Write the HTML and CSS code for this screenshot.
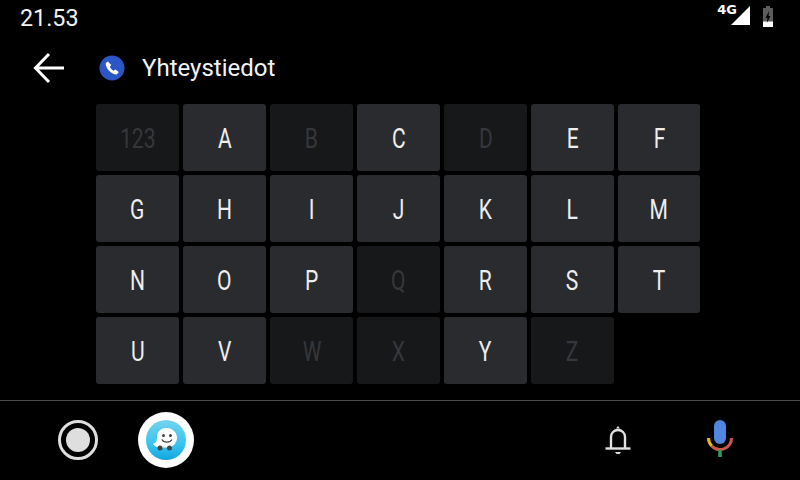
FILE: index.html
```html
<!DOCTYPE html>
<html lang="fi">
<head>
<meta charset="utf-8">
<title>Yhteystiedot</title>
<link rel="stylesheet" href="styles.css">
</head>
<body>
<div class="screen">
  <header class="status">
    <span class="clock">21.53</span>
    <div class="status-icons">
      <span class="net">4G</span>
      <svg class="signal" width="21" height="20" viewBox="0 0 21 20"><path d="M20 0V19H1z" fill="#fff"/></svg>
      <svg class="battery" width="12" height="21" viewBox="0 0 12 21"><path d="M4 0h4v2h3v19H1V2h3z" fill="#5c5c5c"/><path d="M1 15.500h10V21H1z" fill="#fff"/><path d="M7 5 3.500 12H5.500L4.800 17 8.500 10H6.500z" fill="#000"/></svg>
    </div>
  </header>
  <div class="title-row">
    <svg class="back" width="32" height="32" viewBox="0 0 32 32"><path d="M17 2 3.500 16 17 30M3.500 16H32" fill="none" stroke="#fff" stroke-width="3"/></svg>
    <svg class="phone" width="26" height="26" viewBox="0 0 26 26"><circle cx="13" cy="13" r="12.500" fill="#2a56c6"/><path d="M8.800 6.500 6.700 8.200c-.3 5 5.500 11.200 11 11.200l2.100-2.300-3.500-2.700-1.800 1.400c-1.500-.8-3-2.500-3.700-4l1.500-1.700z" fill="#fff"/></svg>
    <h1 class="title">Yhteystiedot</h1>
  </div>
  <main class="keys">
    <div class="key off"><span>123</span></div>
    <div class="key"><span>A</span></div>
    <div class="key off"><span>B</span></div>
    <div class="key"><span>C</span></div>
    <div class="key off"><span>D</span></div>
    <div class="key"><span>E</span></div>
    <div class="key"><span>F</span></div>
    <div class="key"><span>G</span></div>
    <div class="key"><span>H</span></div>
    <div class="key"><span>I</span></div>
    <div class="key"><span>J</span></div>
    <div class="key"><span>K</span></div>
    <div class="key"><span>L</span></div>
    <div class="key"><span>M</span></div>
    <div class="key"><span>N</span></div>
    <div class="key"><span>O</span></div>
    <div class="key"><span>P</span></div>
    <div class="key off"><span>Q</span></div>
    <div class="key"><span>R</span></div>
    <div class="key"><span>S</span></div>
    <div class="key"><span>T</span></div>
    <div class="key"><span>U</span></div>
    <div class="key"><span>V</span></div>
    <div class="key off"><span>W</span></div>
    <div class="key off"><span>X</span></div>
    <div class="key"><span>Y</span></div>
    <div class="key off"><span>Z</span></div>
  </main>
  <footer class="nav">
    <svg class="home" width="40" height="40" viewBox="0 0 40 40"><circle cx="20" cy="20" r="18.500" fill="none" stroke="#dedede" stroke-width="3"/><circle cx="20" cy="20" r="12" fill="#dedede"/></svg>
    <div class="waze">
      <svg width="40" height="40" viewBox="0 0 40 40">
        <defs><linearGradient id="wz" x1="0" y1="0" x2="0" y2="1"><stop offset="0" stop-color="#74d3ee"/><stop offset=".6" stop-color="#3ac4f0"/><stop offset="1" stop-color="#12a6de"/></linearGradient></defs>
        <circle cx="20" cy="20" r="20" fill="url(#wz)"/>
        <path d="M11 16.500C11 11 15.500 8 20.500 8 26.500 8 31 12.500 31 17.500c0 4.500-2.500 8-7 10H14.500c-2.500 0-6.500-.5-7.500-4 2.800 0 4-2 4-7z" fill="#fff"/>
        <circle cx="17.500" cy="15.500" r="1.500" fill="#444"/><circle cx="24.500" cy="15.500" r="1.500" fill="#444"/>
        <path d="M16 19.500c1.500 3.500 8 3.500 10 0" fill="none" stroke="#444" stroke-width="1.300"/>
        <circle cx="14" cy="28" r="2.500" fill="#444"/><circle cx="23.500" cy="28" r="2.500" fill="#444"/>
      </svg>
    </div>
    <svg class="bell" width="28" height="32" viewBox="0 0 28 32"><path d="M7 24V13c0-4 3-7 7-7s7 3 7 7v11" fill="none" stroke="#e0e0e0" stroke-width="2.400"/><path d="M1.500 24.500h25" stroke="#e0e0e0" stroke-width="2.400"/><path d="M12 4.500l2-2.500 2 2.500z" fill="#e0e0e0"/><path d="M11 28h6l-1.500 2h-3z" fill="#e0e0e0"/></svg>
    <svg class="mic" width="28" height="38" viewBox="0 0 28 38"><rect x="8" y="0" width="12" height="24" rx="6" fill="#5086e0"/><path d="M2.500 18a11.500 11.500 0 0 0 3.400 8.100" fill="none" stroke="#e8b32e" stroke-width="3"/><path d="M5.900 26.100A11.500 11.500 0 0 0 25.500 18" fill="none" stroke="#c9574a" stroke-width="3"/><rect x="12.200" y="30" width="3.600" height="7" fill="#2c9a5c"/></svg>
  </footer>
</div>
</body>
</html>
```
FILE: styles.css
```css
* { box-sizing: border-box; }
html, body { margin: 0; height: 100%; background: #000; }
.screen {
  width: 800px;
  height: 480px;
  display: flex;
  flex-direction: column;
  color: #fff;
  font-family: Roboto, sans-serif;
  overflow: hidden;
}
.status {
  height: 36px;
  display: flex;
  justify-content: space-between;
  padding: 4px 26px 0 20px;
}
.clock { font-size: 23.3px; line-height: 28px; color: #f2f2f2; }
.status-icons { display: flex; align-items: flex-start; }
.net { font-family: "DejaVu Sans", sans-serif; font-size: 13px; font-weight: 700; line-height: 12px; margin-right: -7px; }
.signal { margin-top: 2px; }
.battery { margin: 2px 0 0 11px; }
.title-row {
  height: 64px;
  display: flex;
  align-items: center;
  padding: 0 0 0 32px;
}
.back { flex: none; }
.phone { margin-left: 35px; flex: none; margin-top: -1px; }
.title { margin: 0 0 0 17px; font-size: 24px; font-weight: 400; color: #f4f4f4; }
.keys {
  height: 300px;
  padding: 4px 100px 0 96px;
  display: grid;
  grid-template-columns: repeat(6, 83px) 82px;
  grid-auto-rows: 67px;
  gap: 4px;
}
.key {
  background: #2a2b2e;
  border-radius: 3px;
  display: flex;
  align-items: center;
  justify-content: center;
  padding-top: 2px;
  font-size: 27px;
  color: #eeeeee;
}
.key span { display: block; transform: scaleX(.78); }
.key.off { background: #17181a; color: #36373a; }
.nav {
  flex: 1;
  border-top: 1px solid #4a4a4a;
  display: flex;
  align-items: center;
  padding-bottom: 2px;
}
.home { margin-left: 58px; flex: none; }
.waze {
  margin-left: 40px;
  width: 56px;
  height: 56px;
  border-radius: 50%;
  background: #fff;
  display: flex;
  align-items: center;
  justify-content: center;
  flex: none;
}
.bell { margin-left: 410px; flex: none; }
.mic { margin: -1px 0 0 74px; flex: none; }
```
